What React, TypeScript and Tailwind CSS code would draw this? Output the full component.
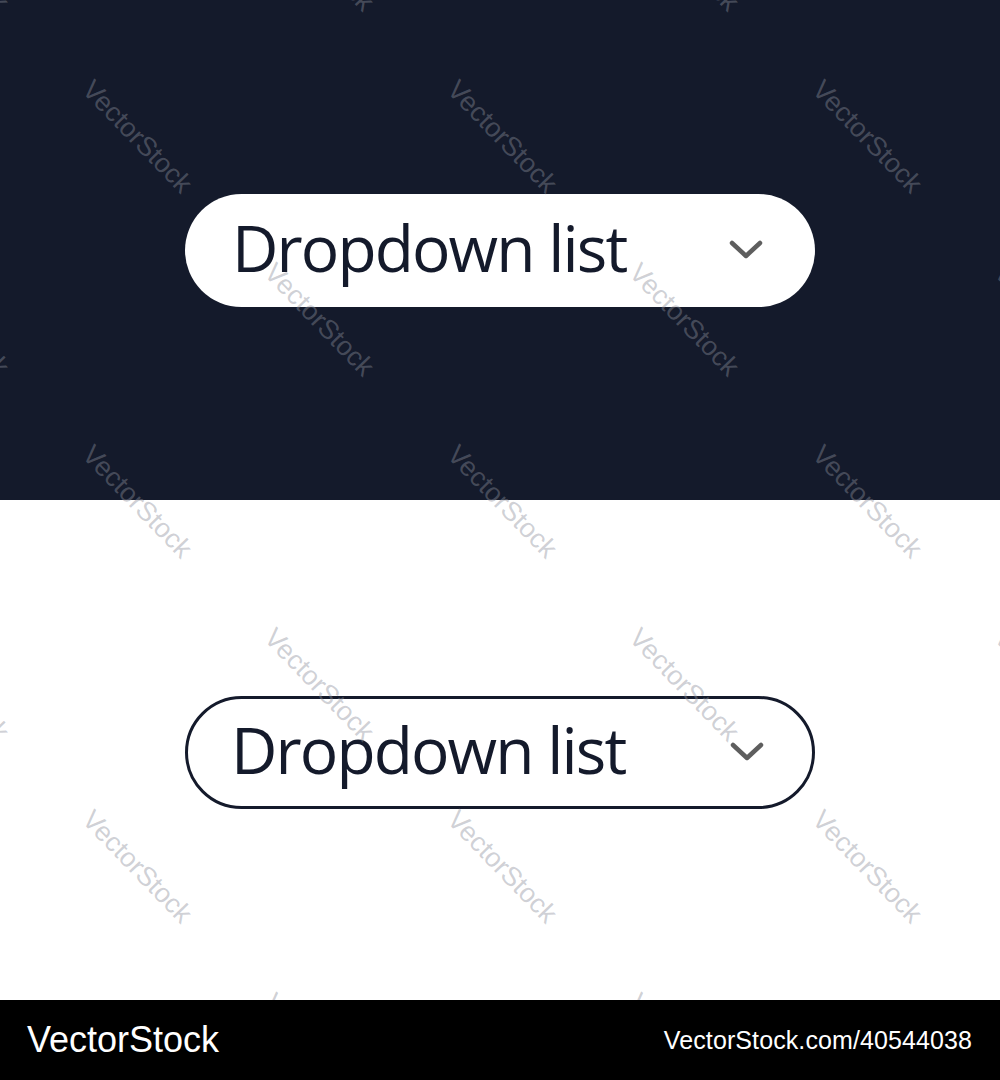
import React from "react";

// tiled diagonal stamp over the two demo panels
const marks: { x: number; y: number }[] = [];
for (let r = -1; r <= 5; r++) {
  for (let k = -1; k <= 3; k++) {
    marks.push({ x: 137 + (Math.abs(r) % 2 === 1 ? 182 : 0) + k * 365, y: 137 + r * 182.5 });
  }
}

const Chevron = () => (
  <svg width="36" height="22" viewBox="0 0 36 22" fill="none">
    <path
      d="M4 4 L18 17 L32 4"
      stroke="#5e5e5e"
      strokeWidth="4.5"
      strokeLinecap="round"
      strokeLinejoin="round"
    />
  </svg>
);

const Dropdown = ({ outlined }: { outlined?: boolean }) => (
  <div
    className={`w-[630px] h-[113px] rounded-full bg-white flex items-center justify-between ${
      outlined ? "border-[3.5px] border-[#141a2b] pl-[43px] pr-[47px]" : "pl-[47px] pr-[51px]"
    }`}
  >
    <span className="font-['Open_Sans',sans-serif] text-[64px] leading-none text-[#141a2b] tracking-[-1.9px] pb-[4px]">
      Dropdown list
    </span>
    <Chevron />
  </div>
);

export default function App() {
  return (
    <div className="w-[1000px] h-[1080px] flex flex-col bg-black">
      <div className="relative h-[1000px] overflow-hidden">
        <div className="h-[500px] bg-[#141a2b] flex items-center justify-center">
          <Dropdown />
        </div>
        <div className="h-[500px] bg-white flex items-center justify-center pt-[4px]">
          <Dropdown outlined />
        </div>

        <div className="absolute inset-0 pointer-events-none">
          {marks.map((m, i) => (
            <span
              key={i}
              className="absolute font-['Liberation_Sans',sans-serif] text-[27px] leading-none text-[rgba(140,144,156,0.42)] whitespace-nowrap"
              style={{ left: m.x, top: m.y, transform: "translate(-50%, -50%) rotate(46deg)" }}
            >
              VectorStock
            </span>
          ))}
        </div>
      </div>

      <div className="h-[80px] bg-black flex items-center justify-between pl-[27px] pr-[28px] text-white font-['Liberation_Sans',sans-serif]">
        <span className="text-[36px] leading-none">VectorStock</span>
        <span className="text-[25px] leading-none tracking-[0.1px]">VectorStock.com/40544038</span>
      </div>
    </div>
  );
}
